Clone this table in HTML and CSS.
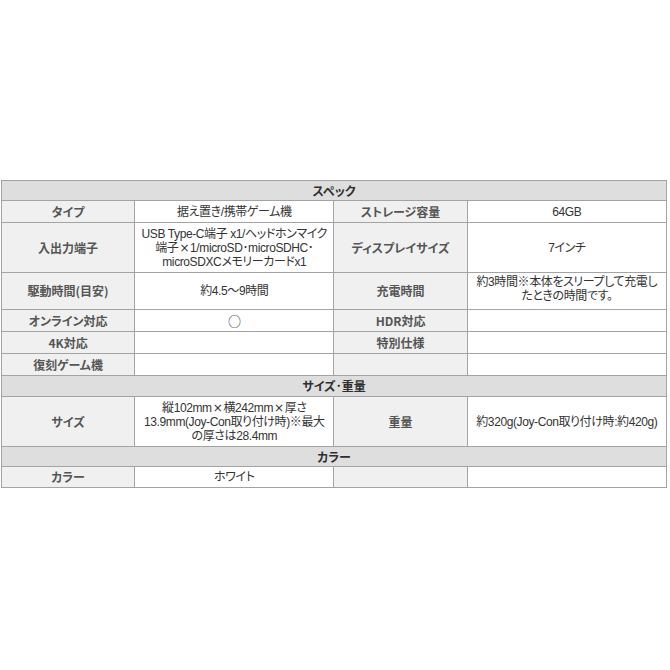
FILE: index.html
```html
<!DOCTYPE html>
<html lang="ja">
<head>
<meta charset="utf-8">
<link rel="stylesheet" href="styles.css">
</head>
<body>
<table class="spec">
  <colgroup>
    <col class="c-lbl"><col class="c-val"><col class="c-lbl"><col class="c-val">
  </colgroup>
  <tr class="r-head"><th class="sec" colspan="4">スペック</th></tr>
  <tr class="r22">
    <th class="lbl">タイプ</th><td class="val">据え置き/携帯ゲーム機</td>
    <th class="lbl">ストレージ容量</th><td class="val">64GB</td>
  </tr>
  <tr class="r50">
    <th class="lbl">入出力端子</th>
    <td class="val">USB Type-C端子 x1/ヘッドホンマイク<br>端子<span class="x">×</span>1/microSD･microSDHC･<br>microSDXCメモリーカードx1</td>
    <th class="lbl">ディスプレイサイズ</th><td class="val">7インチ</td>
  </tr>
  <tr class="r37">
    <th class="lbl">駆動時間(目安)</th><td class="val">約4.5～9時間</td>
    <th class="lbl">充電時間</th><td class="val top">約3時間※本体をスリープして充電し<br>たときの時間です。</td>
  </tr>
  <tr class="r22">
    <th class="lbl">オンライン対応</th><td class="val mark">○</td>
    <th class="lbl">HDR対応</th><td class="val"></td>
  </tr>
  <tr class="r22">
    <th class="lbl">4K対応</th><td class="val"></td>
    <th class="lbl">特別仕様</th><td class="val"></td>
  </tr>
  <tr class="r22">
    <th class="lbl">復刻ゲーム機</th><td class="val"></td>
    <th class="lbl"></th><td class="val"></td>
  </tr>
  <tr class="r-head2"><th class="sec" colspan="4">サイズ･重量</th></tr>
  <tr class="r50">
    <th class="lbl">サイズ</th>
    <td class="val">縦102mm<span class="x">×</span>横242mm<span class="x">×</span>厚さ<br>13.9mm(Joy-Con取り付け時)※最大<br>の厚さは28.4mm</td>
    <th class="lbl">重量</th><td class="val">約320g(Joy-Con取り付け時:約420g)</td>
  </tr>
  <tr class="r-head"><th class="sec" colspan="4">カラー</th></tr>
  <tr class="r21">
    <th class="lbl">カラー</th><td class="val">ホワイト</td>
    <th class="lbl"></th><td class="val"></td>
  </tr>
</table>
</body>
</html>
```

FILE: styles.css
```css
html, body {
  margin: 0;
  padding: 0;
  background: #ffffff;
}

body {
  padding-top: 180px;
  padding-left: 1px;
  font-family: "Noto Sans CJK JP", "Noto Sans", sans-serif;
  font-feature-settings: "palt";
}

.spec {
  border-collapse: collapse;
  width: 666px;
  table-layout: fixed;
  border: 1px solid #8c8c8c;
}

.c-lbl { width: 133px; }
.c-val { width: 199px; }

.spec th,
.spec td {
  border: 1px solid #a3a3a3;
  padding: 0;
  text-align: center;
  vertical-align: middle;
  line-height: 14px;
  white-space: nowrap;
  overflow: hidden;
}

.sec {
  background: #dedede;
  color: #2e2e2e;
  font-size: 12px;
  font-weight: bold;
}

.lbl {
  background: #f0f0f0;
  color: #555555;
  font-size: 12px;
  font-weight: bold;
}

.val {
  background: #ffffff;
  color: #333333;
  font-family: "Liberation Sans", "Noto Sans CJK JP", sans-serif;
  font-size: 12px;
  font-weight: normal;
  letter-spacing: -0.4px;
}

.x {
  font-family: "DejaVu Sans", sans-serif;
  font-size: 12px;
  padding: 0 1px;
}

.val.top {
  vertical-align: top;
  padding-top: 2px;
}

.val.mark {
  font-family: "Noto Sans CJK JP", sans-serif;
  font-size: 13px;
}

.r-head { height: 20px; }
.r-head2 { height: 21px; }
.r22 { height: 22px; }
.r21 { height: 21px; }
.r37 { height: 37px; }
.r50 { height: 50px; }
```
